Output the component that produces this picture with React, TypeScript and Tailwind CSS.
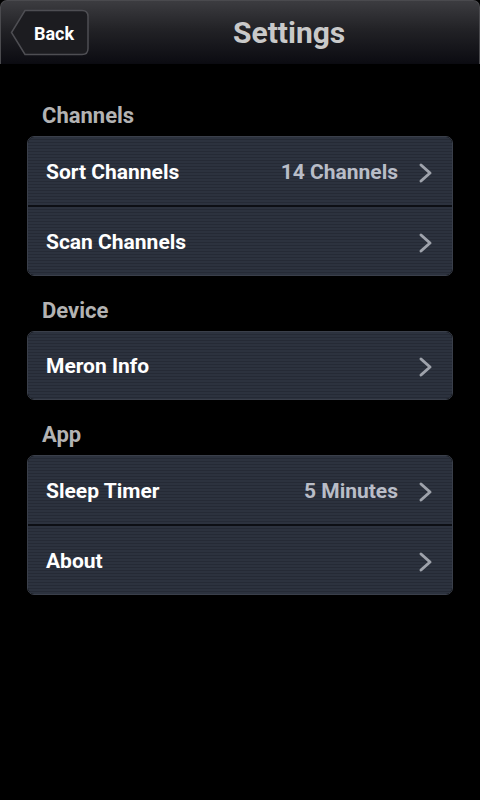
import React from "react";

const stripe =
  "bg-[repeating-linear-gradient(180deg,#2c323e_0px,#2c323e_2px,#252a35_2px,#252a35_3px)]";

function Chevron() {
  return (
    <svg width="18" height="22" viewBox="0 0 18 22" className="shrink-0">
      <path d="M4 3 L13 11 L4 19" fill="none" stroke="#9ea2ab" strokeWidth="3" strokeLinecap="round" strokeLinejoin="round" />
    </svg>
  );
}

function Row({ label, value, h, sep }: { label: string; value?: string; h: string; sep?: boolean }) {
  return (
    <div className={`box-border flex items-center ${h} pl-[18px] pr-[17px] pt-[3px] ${stripe} ${sep ? "border-b-2 border-[#0d0f14]" : ""}`}>
      <span className="text-[21px] font-bold text-white">{label}</span>
      <div className="ml-auto flex items-center gap-[19px]">
        {value && <span className="text-[21px] font-bold text-[#b9bdc7]">{value}</span>}
        <Chevron />
      </div>
    </div>
  );
}

function Section({ title, children }: { title: string; children: React.ReactNode }) {
  return (
    <div>
      <div className="pl-[42px] h-[43px] flex items-end pb-[4px] text-[22px] font-bold text-[#b3b3b3]">{title}</div>
      <div className="mx-[27px] rounded-[7px] overflow-hidden border border-[#3a3f4a]">{children}</div>
    </div>
  );
}

export default function App() {
  return (
    <div className="w-[480px] h-[800px] bg-black font-['Roboto',sans-serif] overflow-hidden">
      <div className="h-[64px] rounded-t-[7px] border border-[#4a4a4e] border-b-0 bg-[linear-gradient(180deg,#3c3c40_0%,#222226_45%,#0b0b11_100%)] flex items-center pl-[9px]">
        <button className="relative w-[80px] h-[47px] flex items-center justify-center shrink-0">
          <svg className="absolute inset-0" width="80" height="47" viewBox="0 0 80 47">
            <path d="M15 1.5 H72 Q78 1.5 78 7.5 V39.5 Q78 45.5 72 45.5 H15 L1.5 23.5 Z" fill="#1c1c20" stroke="#4e4e53" strokeWidth="1.5" />
          </svg>
          <span className="relative pl-[8px] pt-[1px] text-[18px] font-bold text-white">Back</span>
        </button>
        <span className="ml-[143px] text-[30px] font-bold text-[#c9c9c9]">Settings</span>
      </div>
      <div className="pt-[29px]">
        <Section title="Channels">
          <Row label="Sort Channels" value="14 Channels" h="h-[70px]" sep />
          <Row label="Scan Channels" h="h-[68px]" />
        </Section>
        <div className="h-[12px]" />
        <Section title="Device">
          <Row label="Meron Info" h="h-[67px]" />
        </Section>
        <div className="h-[12px]" />
        <Section title="App">
          <Row label="Sleep Timer" value="5 Minutes" h="h-[70px]" sep />
          <Row label="About" h="h-[68px]" />
        </Section>
      </div>
    </div>
  );
}
